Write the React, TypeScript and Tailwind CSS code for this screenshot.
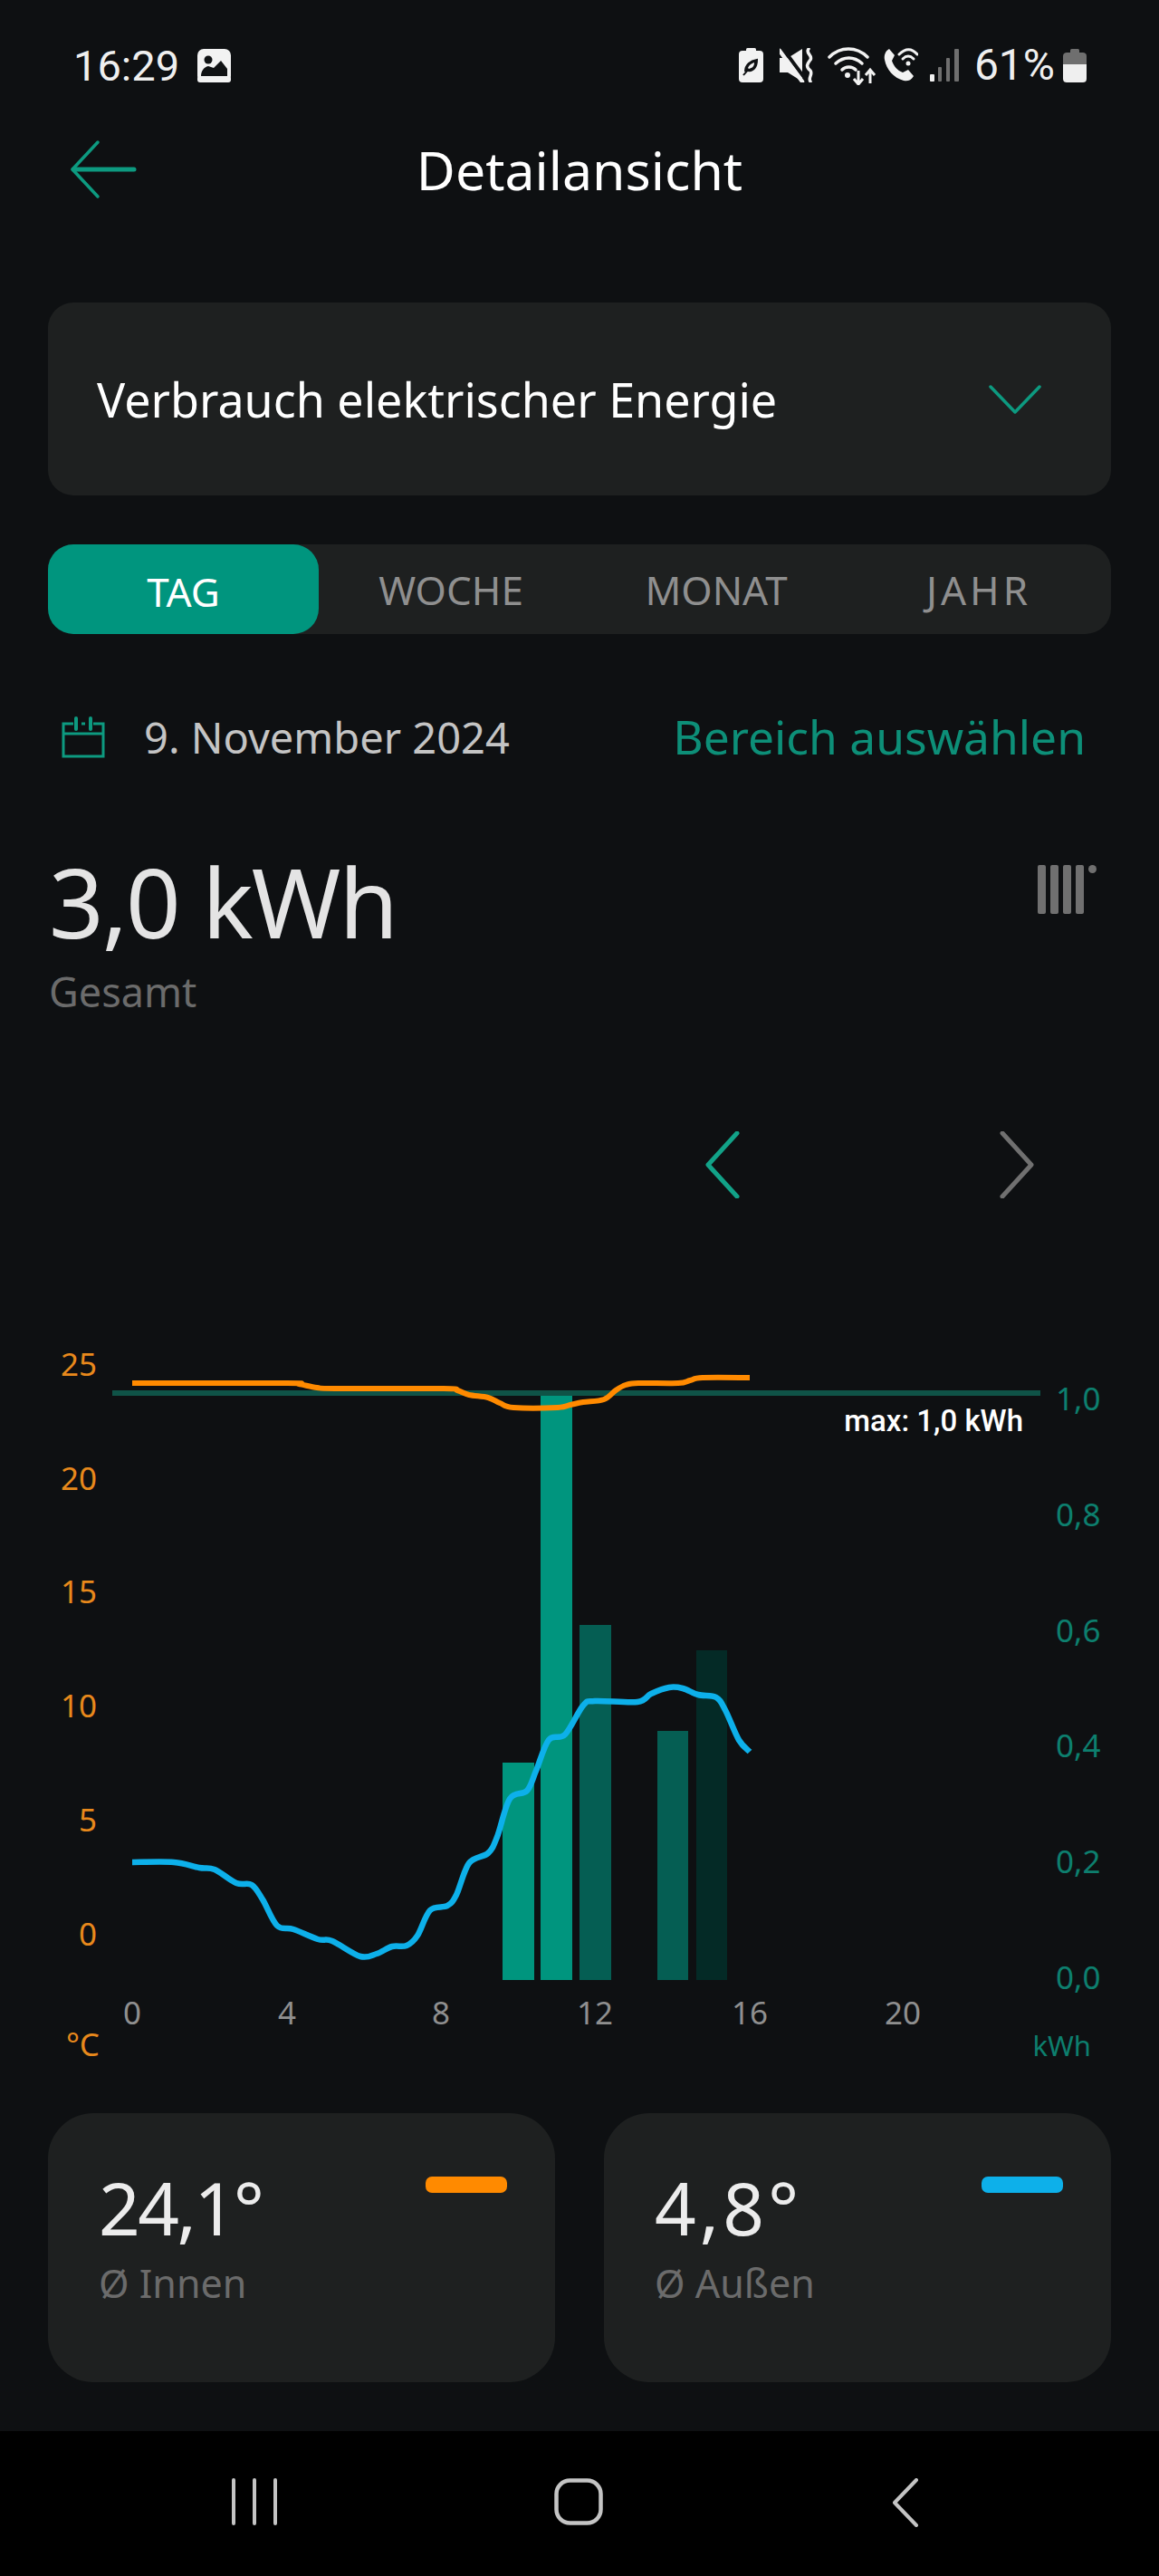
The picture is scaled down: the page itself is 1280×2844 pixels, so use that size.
const FONT = "font-['Noto_Sans',sans-serif]";

const TABS = [
  { label: 'WOCHE', cls: 'w-[292px]' },
  { label: 'MONAT', cls: 'w-[294px]' },
  { label: 'JAHR', cls: 'w-[286px] tracking-[4px]' },
];

// chart data in page pixels
const BARS = [
  { x: 555, w: 35, top: 1946, fill: '#00957e' },
  { x: 597, w: 35, top: 1538, fill: '#00957e' },
  { x: 640, w: 35, top: 1794, fill: '#055e53' },
  { x: 726, w: 34, top: 1911, fill: '#055e53' },
  { x: 769, w: 34, top: 1822, fill: '#042a26' },
];
const BASELINE = 2186;

const INSIDE: [number, number][] = [
  [146, 1527], [317, 1527], [330, 1528], [350, 1532], [370, 1533], [490, 1533], [505, 1535], [518, 1540], [539, 1543],
  [552, 1549], [567, 1554], [616, 1554], [630, 1551], [644, 1548], [667, 1545], [680, 1535], [691, 1529], [705, 1527],
  [749, 1527], [762, 1524], [776, 1521], [828, 1521],
];
const OUTSIDE: [number, number][] = [
  [146, 2056], [192, 2056], [220, 2062], [237, 2064], [261, 2079], [278, 2081], [290, 2097], [306, 2126], [324, 2130],
  [351, 2141], [367, 2143], [398, 2160], [416, 2157], [433, 2149], [449, 2148], [461, 2137], [475, 2109], [494, 2104],
  [504, 2092], [518, 2057], [539, 2046], [549, 2028], [563, 1986], [582, 1977], [592, 1955], [606, 1921], [624, 1915],
  [644, 1883], [657, 1878], [704, 1879], [719, 1870], [739, 1863], [754, 1864], [771, 1871], [791, 1874], [801, 1888],
  [816, 1921], [828, 1934],
];

function smooth(pts: [number, number][]) {
  // catmull-rom to bezier
  let d = `M${pts[0][0]} ${pts[0][1]}`;
  for (let i = 0; i < pts.length - 1; i++) {
    const p0 = pts[Math.max(i - 1, 0)];
    const p1 = pts[i];
    const p2 = pts[i + 1];
    const p3 = pts[Math.min(i + 2, pts.length - 1)];
    const c1x = p1[0] + (p2[0] - p0[0]) / 6;
    const c1y = p1[1] + (p2[1] - p0[1]) / 6;
    const c2x = p2[0] - (p3[0] - p1[0]) / 6;
    const c2y = p2[1] - (p3[1] - p1[1]) / 6;
    d += ` C${c1x.toFixed(1)} ${c1y.toFixed(1)} ${c2x.toFixed(1)} ${c2y.toFixed(1)} ${p2[0]} ${p2[1]}`;
  }
  return d;
}

function StatusIcons() {
  return (
    <div className="flex items-center">
      {/* battery saver */}
      <svg width="27" height="38" viewBox="0 0 27 38" className="mr-[18px]">
        <rect x="8" y="0" width="11" height="5" rx="1.5" fill="#f2f2f2" />
        <rect x="0" y="3" width="27" height="35" rx="4" fill="#f2f2f2" />
        <path d="M7 26C7 18 13 14 20 13C20 21 16 26 10 25M5 30C8 26 11 23 15 20" fill="#101214" stroke="#101214" strokeWidth="2" />
        <path d="M10 22C11 19 14 17 17 16C17 20 15 22 11 23Z" fill="#f2f2f2" />
      </svg>
      {/* mute + vibrate */}
      <svg width="37" height="38" viewBox="0 0 37 38" className="mr-[16px]">
        <path d="M0 11H9L25 1V37L9 27H0Z" fill="#f2f2f2" />
        <path d="M3 0L29 35" stroke="#101214" strokeWidth="4" />
        <path d="M0 3L25 37" stroke="#f2f2f2" strokeWidth="4.5" strokeLinecap="round" />
        <path d="M32 1C28 6 37 8 34 13C31 17 28 20 34 25C37 29 31 33 34 37" fill="none" stroke="#f2f2f2" strokeWidth="3.5" strokeLinecap="round" />
      </svg>
      {/* wifi with arrows */}
      <svg width="54" height="42" viewBox="0 0 54 42" className="mr-[8px] mt-[2px]">
        <g fill="none" stroke="#f2f2f2" strokeWidth="3.5" strokeLinecap="round">
          <path d="M2 11C14 -1 32 -1 44 11" />
          <path d="M9 18C18 10 29 10 38 18" />
          <path d="M16 25C20 21 27 21 31 25" />
        </g>
        <circle cx="22" cy="31" r="3" fill="#f2f2f2" />
        <path d="M34 26V40M29 35L34 41L39 35" fill="none" stroke="#f2f2f2" strokeWidth="3" />
        <path d="M47 40V26M42 31L47 25L52 31" fill="none" stroke="#f2f2f2" strokeWidth="3" />
      </svg>
      {/* wifi calling */}
      <svg width="38" height="38" viewBox="0 0 38 38" className="mr-[13px]">
        <path d="M6 1L12 8L9 14C11 20 15 25 21 27L27 24L33 31C30 36 26 37 22 36C11 33 3 24 1 13C0 8 2 3 6 1Z" fill="#f2f2f2" />
        <g fill="none" stroke="#f2f2f2" strokeWidth="3" strokeLinecap="round">
          <path d="M17 7C24 0 31 0 37 7" />
          <path d="M21 12C25 8 29 8 33 12" />
        </g>
        <circle cx="27" cy="17" r="2.5" fill="#f2f2f2" />
      </svg>
      {/* signal */}
      <svg width="32" height="36" viewBox="0 0 32 36" className="mr-[17px]">
        <rect x="0" y="28" width="5" height="8" rx="1" fill="#f2f2f2" />
        <rect x="9" y="20" width="4" height="16" rx="1" fill="#6f6f6f" />
        <rect x="18" y="10" width="4" height="26" rx="1" fill="#6f6f6f" />
        <rect x="27" y="0" width="5" height="36" rx="1" fill="#6f6f6f" />
      </svg>
      <span className="font-['Roboto',sans-serif] text-[48px] leading-none text-[#efefef] mr-[9px]">61%</span>
      {/* battery */}
      <svg width="26" height="37" viewBox="0 0 26 37">
        <rect x="8" y="0" width="10" height="5" rx="1.5" fill="#6f6f6f" />
        <path d="M0 8C0 5 2 4 4 4H22C24 4 26 5 26 8V17H0Z" fill="#6f6f6f" />
        <path d="M0 17H26V33C26 36 24 37 22 37H4C2 37 0 36 0 33Z" fill="#efefef" />
      </svg>
    </div>
  );
}

function Chart() {
  const left = [['25', 1507], ['20', 1633], ['15', 1758], ['10', 1884], ['5', 2010], ['0', 2136]] as const;
  const right = [['1,0', 1545], ['0,8', 1673], ['0,6', 1801], ['0,4', 1928], ['0,2', 2056], ['0,0', 2184]] as const;
  const hours = [['0', 146], ['4', 317], ['8', 487], ['12', 657], ['16', 828], ['20', 997]] as const;
  return (
    <svg viewBox="0 1460 1280 830" className="w-[1280px] h-[830px] block" fontFamily="'Noto Sans', sans-serif">
      {BARS.map(b => (
        <rect key={b.x} x={b.x} y={b.top} width={b.w} height={BASELINE - b.top} fill={b.fill} />
      ))}
      <rect x="124" y="1535" width="1025" height="6" fill="#0f5347" />
      <path d={smooth(INSIDE)} fill="none" stroke="#ff8a00" strokeWidth="6" />
      <path d={smooth(OUTSIDE)} fill="none" stroke="#0db0ea" strokeWidth="6.5" />
      {left.map(([t, y]) => (
        <text key={t} x="107" y={y + 12} textAnchor="end" fontSize="35" fill="#e8891c">{t}</text>
      ))}
      <text x="110" y="2270" textAnchor="end" fontSize="35" fill="#e8891c">°C</text>
      {hours.map(([t, x]) => (
        <text key={t} x={x} y="2235" textAnchor="middle" fontSize="35" fill="#8f8f8f">{t}</text>
      ))}
      {right.map(([t, y]) => (
        <text key={t} x="1166" y={y + 12} fontSize="35" fill="#0d7f6e">{t}</text>
      ))}
      <text x="1205" y="2270" textAnchor="end" fontSize="31" fill="#0d7f6e">kWh</text>
      <text x="1130" y="1580" textAnchor="end" fontSize="33" fontFamily="Roboto, sans-serif" fontWeight="500" fill="#ffffff">max: 1,0 kWh</text>
    </svg>
  );
}

function TempCard({ value, label, color, tracking }: { value: string; label: string; color: string; tracking: string }) {
  return (
    <div className="relative w-[560px] h-[297px] rounded-[50px] bg-[#1e2020] pl-[56px] pt-[49px]">
      <div className={`${FONT} text-[80px] leading-[110px] text-[#ececec] ${tracking}`}>{value}</div>
      <div className={`${FONT} text-[43px] leading-[60px] text-[#6b6b6b] mt-[-1px]`}>{label}</div>
      <div className={`absolute right-[53px] top-[70px] w-[90px] h-[18px] rounded-[7px] ${color}`} />
    </div>
  );
}

export default function App() {
  return (
    <div className={`${FONT} w-[1280px] h-[2844px] bg-[#0e1012] flex flex-col overflow-hidden`}>
      {/* status bar */}
      <div className="h-[144px] flex items-center justify-between pl-[81px] pr-[80px]">
        <div className="flex items-center">
          <span className="font-['Roboto',sans-serif] text-[47px] leading-none text-[#efefef] mr-[20px]">16:29</span>
          <svg width="37" height="37" viewBox="0 0 37 37">
            <rect width="37" height="37" rx="7" fill="#f2f2f2" />
            <circle cx="12" cy="12" r="4.5" fill="#101214" />
            <path d="M4 30C4 25 7 20 12 19L18 21L26 13L33 22V30Z" fill="#101214" />
            <rect x="0" y="30" width="37" height="7" rx="3" fill="#f2f2f2" />
          </svg>
        </div>
        <StatusIcons />
      </div>

      {/* header */}
      <div className="relative h-[86px] flex items-center justify-center">
        <svg width="74" height="66" viewBox="0 0 74 66" className="absolute left-[77px] top-[10px]" fill="none" stroke="#0d9a80" strokeLinecap="round">
          <path d="M31 3L3 33L31 63" strokeWidth="3.5" strokeLinejoin="round" />
          <path d="M4 33H71" strokeWidth="5" />
        </svg>
        <h1 className="text-[59px] leading-none text-white">Detailansicht</h1>
      </div>

      {/* energy select */}
      <div className="mt-[104px] mx-[53px] h-[213px] rounded-[28px] bg-[#1e2020] flex items-center justify-between pl-[54px] pr-[77px]">
        <span className="text-[52px] leading-none text-white">Verbrauch elektrischer Energie</span>
        <svg width="58" height="34" viewBox="0 0 58 34" fill="none" stroke="#0d9a80" strokeWidth="3.5" strokeLinecap="round" strokeLinejoin="round">
          <path d="M2 3L29 31L56 3" />
        </svg>
      </div>

      {/* tabs */}
      <div className="mt-[54px] mx-[53px] h-[99px] rounded-[28px] bg-[#1e2020] flex items-center">
        <div className="w-[299px] h-[99px] pt-[5px] rounded-[28px] bg-[#00957e] flex items-center justify-center text-[44px] text-white">TAG</div>
        {TABS.map(t => (
          <div key={t.label} className={`${t.cls} text-center text-[44px] text-[#8f8f8f]`}>{t.label}</div>
        ))}
      </div>

      {/* date row */}
      <div className="mt-[84px] h-[60px] flex items-center justify-between pl-[68px] pr-[81px]">
        <div className="flex items-center">
          <svg width="48" height="46" viewBox="0 0 48 46" fill="none" stroke="#0d9a80" strokeWidth="3" className="mr-[43px]">
            <path d="M13 8H2V44H46V8H35" />
            <path d="M2 19H46" />
            <path d="M16 2V14M32 2V14" strokeWidth="4" strokeLinecap="round" />
            <path d="M22 8H26" />
          </svg>
          <span className="text-[47px] leading-none text-[#c4c4c4]">9. November 2024</span>
        </div>
        <span className="text-[51.5px] leading-none text-[#0d8f78]">Bereich auswählen</span>
      </div>

      {/* total */}
      <div className="relative mt-[86px] pl-[54px]">
        <div className="text-[106px] leading-[130px] tracking-[-2px] text-[#e4e4e4]">3,0 kWh</div>
        <div className="text-[45px] leading-[60px] mt-[5px] text-[#6b6b6b]">Gesamt</div>
        <div className="absolute left-[1146px] top-[25px] flex gap-[5px]">
          {[0, 1, 2, 3].map(i => (
            <div key={i} className="w-[9px] h-[54px] rounded-[2px] bg-[#707070]" />
          ))}
          <div className="w-[9px] h-[9px] rounded-full bg-[#707070]" />
        </div>
      </div>

      {/* period arrows */}
      <div className="mt-[125px] h-[72px] flex items-center pl-[779px]">
        <svg width="38" height="74" viewBox="0 0 38 74" fill="none" stroke="#12a288" strokeWidth="5" strokeLinecap="round" strokeLinejoin="round">
          <path d="M35 2L3 37L35 72" />
        </svg>
        <svg width="38" height="74" viewBox="0 0 38 74" fill="none" stroke="#707070" strokeWidth="5" strokeLinecap="round" strokeLinejoin="round" className="ml-[287px]">
          <path d="M3 2L35 37L3 72" />
        </svg>
      </div>

      <div className="mt-[138px]">
        <Chart />
      </div>

      {/* averages */}
      <div className="mt-[43px] mx-[53px] flex justify-between">
        <TempCard value="24,1°" label="Ø Innen" color="bg-[#ff8a00]" tracking="tracking-[-2.5px]" />
        <TempCard value="4,8°" label="Ø Außen" color="bg-[#0db0ea]" tracking="tracking-[4px]" />
      </div>

      {/* android nav */}
      <div className="mt-[54px] h-[160px] bg-black flex items-start pt-[52px] pl-[256px]">
        <svg width="50" height="52" viewBox="0 0 50 52" stroke="#c4c4c4" strokeWidth="4" strokeLinecap="round">
          <path d="M2 2V50M25 2V50M48 2V50" />
        </svg>
        <svg width="54" height="52" viewBox="0 0 54 52" fill="none" stroke="#c4c4c4" strokeWidth="4.5" className="ml-[306px]">
          <rect x="2.5" y="2.5" width="49" height="47" rx="15" />
        </svg>
        <svg width="32" height="54" viewBox="0 0 32 54" fill="none" stroke="#c4c4c4" strokeWidth="4" strokeLinecap="round" strokeLinejoin="round" className="ml-[318px]">
          <path d="M28 2L4 27L28 52" />
        </svg>
      </div>
    </div>
  );
}
